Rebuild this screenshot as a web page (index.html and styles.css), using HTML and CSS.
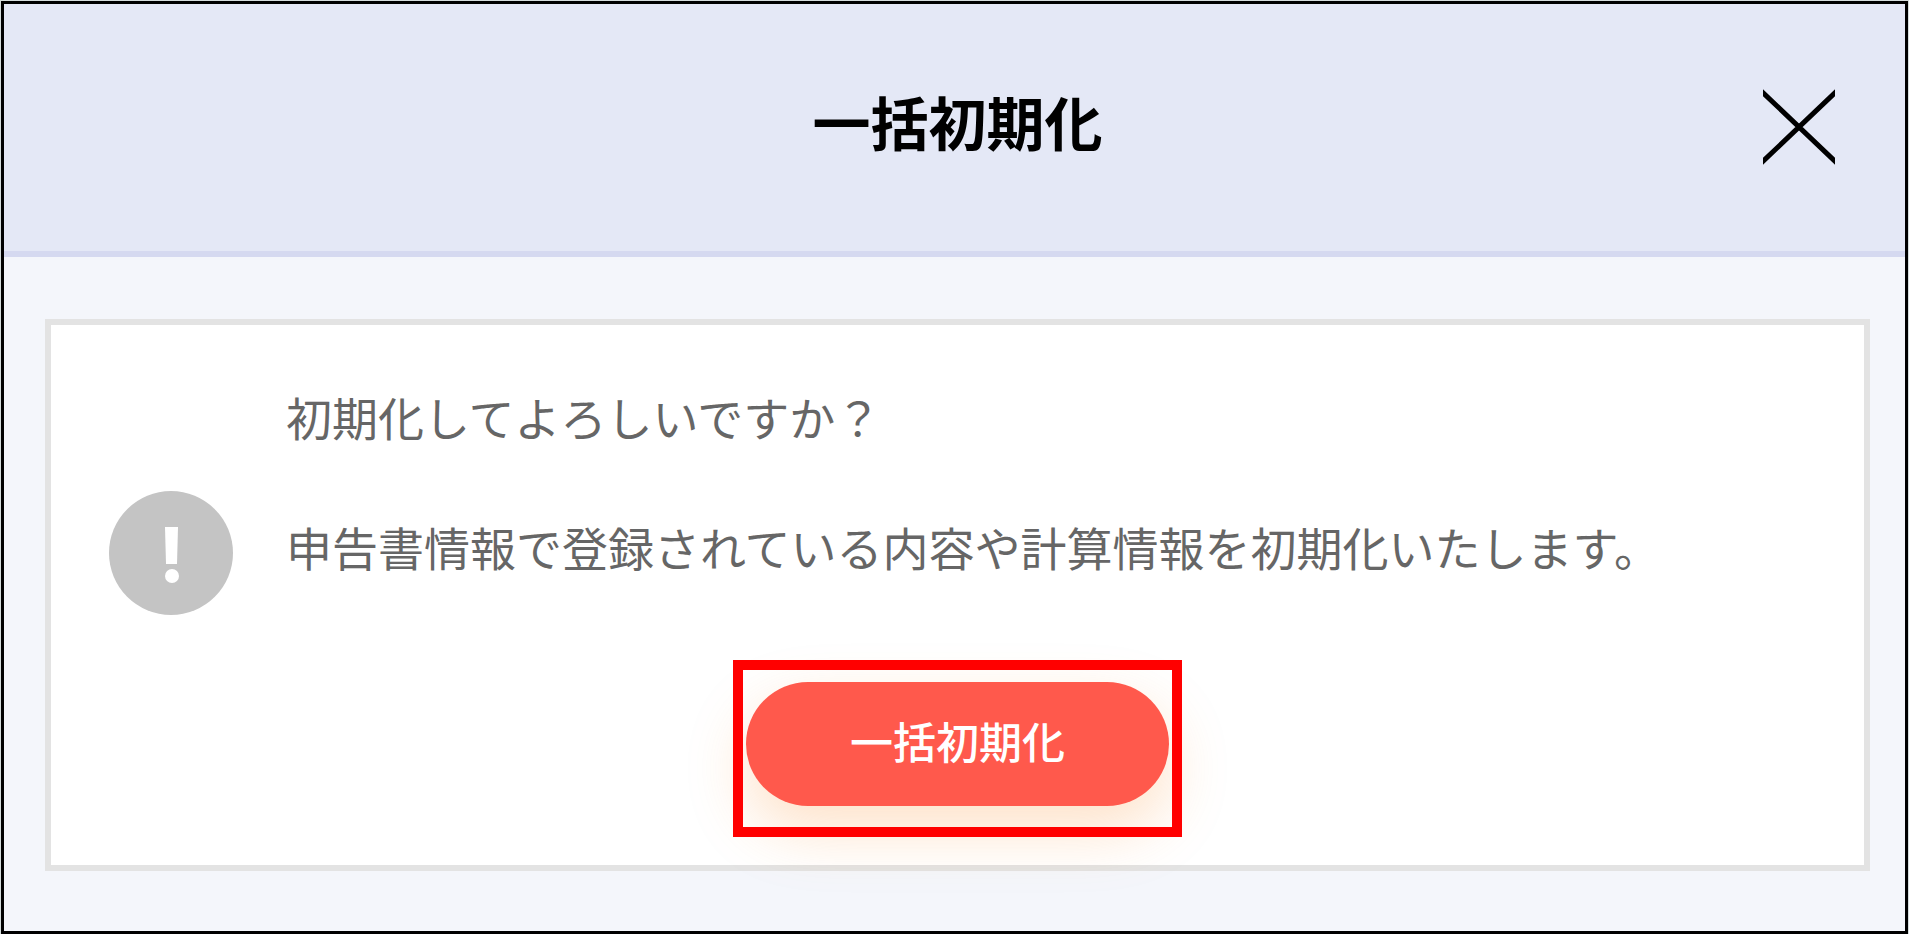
FILE: index.html
```html
<!DOCTYPE html>
<html lang="ja">

<head>
    <meta charset="UTF-8">
    <meta name="viewport" content="width=device-width, initial-scale=1.0">
    <title>一括初期化</title>
    <link rel="stylesheet" href="styles.css">
</head>

<body>

    <div class="dialog" role="dialog" aria-labelledby="dialog-title">
        <header class="dialog-header">
            <h1 id="dialog-title">一括初期化</h1>
            <button type="button" class="close" aria-label="閉じる">
                <svg width="72" height="78" viewBox="0 0 72 78">
                    <path d="M-6 -1L78 79M78 -1L-6 79" stroke="#000" stroke-width="5" />
                </svg>
            </button>
        </header>

        <main class="card">
            <div class="notice">
                <svg class="notice-icon" width="124" height="124" viewBox="0 0 124 124">
                    <circle cx="62" cy="62" r="62" fill="#c4c4c4" />
                    <path d="M56 36h13l-1 37H57z" fill="#fff" />
                    <circle cx="63" cy="85" r="7" fill="#fff" />
                </svg>
                <div class="message">
                    <p>初期化してよろしいですか？</p>
                    <p>申告書情報で登録されている内容や計算情報を初期化いたします。</p>
                </div>
            </div>
            <div class="highlight">
                <button type="button" class="submit">一括初期化</button>
            </div>
        </main>
    </div>

</body>

</html>
```

FILE: styles.css
```css
* {
    box-sizing: border-box;
}

body {
    margin: 0;
    padding: 1px;
    min-height: 100vh;
    display: flex;
    background-color: #d5dcdc;
    font-family: "Noto Sans CJK JP", sans-serif;
}

button {
    border: none;
    font-family: inherit;
    cursor: pointer;
}

.dialog {
    flex: 1;
    border: 3px solid #000;
    background-color: #f4f6fb;
}

.dialog-header {
    display: grid;
    grid-template-columns: 1fr auto 1fr;
    align-items: center;
    height: 253px;
    padding: 0 70px 2px 76px;
    background-color: #e4e8f6;
    border-bottom: 6px solid #d5d9f0;
}

.dialog-header h1 {
    grid-column: 2;
    margin: 0;
    padding-bottom: 12px;
    font-size: 58px;
    line-height: 80px;
    font-weight: bold;
    color: #000;
}

.close {
    justify-self: end;
    padding: 0;
    background: none;
}

.close svg {
    display: block;
    overflow: hidden;
}

.card {
    margin: 62px 35px 60px 41px;
    padding: 62px 58px 28px;
    background-color: #fff;
    border: 6px solid #e3e3e3;
}

.notice {
    display: flex;
    align-items: flex-end;
    gap: 53px;
}

.notice-icon {
    flex: none;
}

.message {
    display: flex;
    flex-direction: column;
    gap: 65px;
    margin-top: -3px;
    padding-bottom: 36px;
    font-size: 46px;
    line-height: 65px;
    color: #666;
}

.message p {
    margin: 0;
}

.highlight {
    position: relative;
    width: fit-content;
    margin: 45px auto 0;
    padding: 22px 13px 31px;
}

/* red frame, kept above the button shadow */
.highlight::after {
    content: "";
    position: absolute;
    inset: 0;
    border: 10px solid #f00;
    pointer-events: none;
}

.submit {
    display: block;
    padding: 0 104px 8px;
    font-size: 43px;
    line-height: 116px;
    font-weight: 500;
    color: #fff;
    background-color: #ff594c;
    border-radius: 62px;
    box-shadow: 0 24px 60px rgba(250, 140, 40, 0.25);
}
```
